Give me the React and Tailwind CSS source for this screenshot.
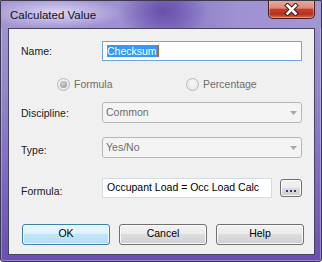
import React from "react";

const Radio = ({ checked }) => (
  <span className="w-[13px] h-[13px] rounded-full border border-[#b9b9b9] bg-[radial-gradient(circle_at_50%_40%,#fafafa,#e0e0e0)] flex items-center justify-center">
    {checked && (
      <span className="w-[7px] h-[7px] rounded-full bg-[radial-gradient(circle_at_40%_35%,#d4d4d4,#8e8e8e)]" />
    )}
  </span>
);

const Select = ({ value }) => (
  <div className="w-[200px] h-[21px] rounded-[3px] border border-[#b7b7b7] bg-[#f4f4f4] flex items-center pl-[3px] pr-[4px] text-[#6d6d6d]">
    <span className="flex-1">{value}</span>
    <svg width="7" height="4" viewBox="0 0 7 4">
      <path d="M0 0H7L3.5 4Z" fill="#a8a8a8" />
    </svg>
  </div>
);

const Button = ({ children, primary }) => (
  <button
    className={
      primary
        ? "w-[88px] h-[21px] rounded-[3px] border border-[#3c7fb1] shadow-[inset_0_0_0_1px_#eef8fe] bg-[linear-gradient(180deg,#ecf7fd_0%,#dcf1fc_50%,#c2e6f8_50%,#b3dcf2_100%)] text-black"
        : "w-[88px] h-[21px] rounded-[3px] border border-[#707070] shadow-[inset_0_0_0_1px_#fbfbfb] bg-[linear-gradient(180deg,#f2f2f2_0%,#ebebeb_50%,#dddddd_50%,#cfcfcf_100%)] text-black"
    }
  >
    {children}
  </button>
);

export default function App() {
  return (
    <div className="w-[322px] h-[262px] flex flex-col border border-[#3a3a4c] rounded-b-[3px] shadow-[inset_0_0_0_1px_rgba(255,255,255,0.3)] bg-[linear-gradient(180deg,#a597d6_0%,#9485ce_35%,#7a62c1_75%,#6a4fb3_100%)] font-['Liberation_Sans',Arial,sans-serif] text-[10.5px] text-[#1b1b1b] overflow-hidden">
      {/* Title bar */}
      <div className="h-[27px] flex items-start pl-[9px] pr-[6px] bg-[radial-gradient(ellipse_70px_16px_at_55px_12px,rgba(235,230,250,0.8),transparent),radial-gradient(ellipse_45px_34px_at_162px_10px,rgba(95,70,165,0.85),transparent),linear-gradient(90deg,#a395d4_0%,#9d8fd1_40%,#8d7dca_55%,#a092d2_75%,#a396d4_100%)]">
        <span className="pt-[6px] text-[11.5px] text-[#101020] flex-1">Calculated Value</span>
        <div className="w-[47px] h-[19px] -mt-px rounded-b-[5px] border border-[#4a1c18] border-t-0 shadow-[inset_0_0_0_1px_rgba(255,200,190,0.45)] bg-[linear-gradient(180deg,#e8ad9f_0%,#d98a7b_45%,#c4402c_52%,#b5301f_78%,#d66a4d_100%)] flex items-center justify-center">
          <svg width="15" height="13" viewBox="0 0 15 13">
            <path d="M3.5 2.5L11.5 10.5M11.5 2.5L3.5 10.5" stroke="#3a2424" strokeWidth="4.6" strokeLinecap="square" />
            <path d="M3.5 2.5L11.5 10.5M11.5 2.5L3.5 10.5" stroke="#ffffff" strokeWidth="2.6" strokeLinecap="square" />
          </svg>
        </div>
      </div>

      {/* Content */}
      <div className="flex-1 ml-[7px] mr-[6px] mb-[6px] border border-[#44445a] bg-[#f0f0f0] flex flex-col pl-[12px]">
        <div className="mt-[12px] flex items-center">
          <span className="w-[81px] pt-[2px]">Name:</span>
          <div className="w-[200px] h-[20px] border border-[#6fa8dc] bg-white flex items-center pl-[4px]">
            <span className="bg-[#3399ff] text-white leading-[12px] h-[12px]">Checksum</span>
            <span className="w-[2px] h-[12px] bg-[#c8651a]" />
          </div>
        </div>

        <div className="mt-[17px] h-[13px] flex items-center pl-[36px] text-[#6d6d6d]">
          <div className="w-[129px] flex items-center gap-[4px]">
            <Radio checked />
            <span>Formula</span>
          </div>
          <div className="flex items-center gap-[4px]">
            <Radio />
            <span>Percentage</span>
          </div>
        </div>

        <div className="mt-[11px] flex items-center">
          <span className="w-[81px] pt-[2px]">Discipline:</span>
          <Select value="Common" />
        </div>

        <div className="mt-[14px] flex items-center">
          <span className="w-[81px] pt-[6px]">Type:</span>
          <Select value="Yes/No" />
        </div>

        <div className="mt-[18px] flex items-center">
          <span className="w-[81px] pt-[7px]">Formula:</span>
          <div className="w-[170px] h-[20px] border border-[#d5dbe3] bg-white flex items-center pl-[4px] text-black">
            Occupant Load = Occ Load Calc
          </div>
          <div className="ml-[8px] w-[22px] h-[18px] rounded-[3px] border border-[#707070] shadow-[inset_0_0_0_1px_#fbfbfb] bg-[linear-gradient(180deg,#f2f2f2_0%,#ebebeb_50%,#dddddd_50%,#cfcfcf_100%)] flex items-end justify-center gap-[2px] pb-[4px]">
            <span className="w-[2px] h-[2px] bg-[#3b2f86]" />
            <span className="w-[2px] h-[2px] bg-[#3b2f86]" />
            <span className="w-[2px] h-[2px] bg-[#3b2f86]" />
          </div>
        </div>

        <div className="mt-[24px] flex gap-[9px] pl-[1px]">
          <Button primary>OK</Button>
          <Button>Cancel</Button>
          <Button>Help</Button>
        </div>
      </div>
    </div>
  );
}
